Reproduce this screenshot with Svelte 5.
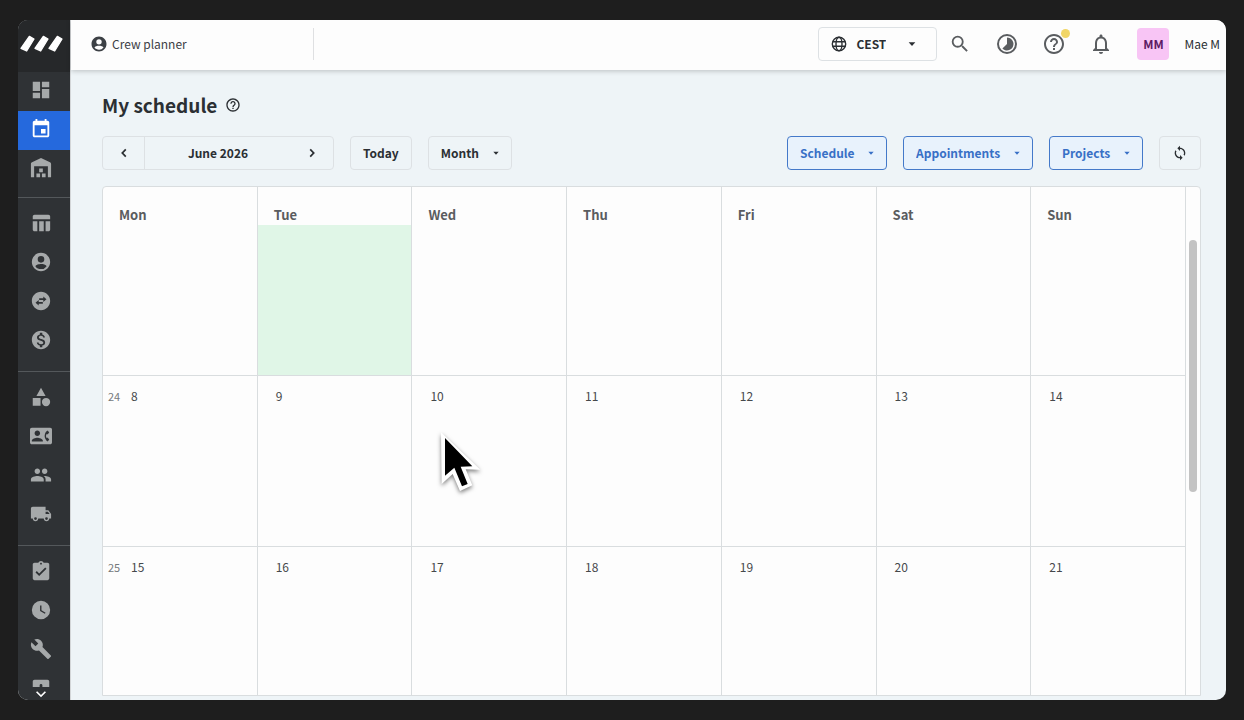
<script lang="ts">
  interface NavItem {
    name: string;
    label: string;
    active?: boolean;
  }

  interface Day {
    num: number | null;
    today?: boolean;
  }

  interface Week {
    num: number | null;
    days: Day[];
  }

  // 24x24 glyphs
  const icons: Record<string, string> = {
    dashboard: 'M3 13h8V3H3v10zm0 8h8v-6H3v6zm10 0h8V11h-8v10zm0-18v6h8V3h-8z',
    event:
      'M17 12h-5v5h5v-5zM16 1v2H8V1H6v2H5c-1.110 0-1.990.9-1.990 2L3 19c0 1.100.89 2 2 2h14c1.100 0 2-.9 2-2V5c0-1.100-.9-2-2-2h-1V1h-2zm3 18H5V8h14v11z',
    warehouse:
      'M1 22V7.500c0-.8.500-1.500 1.200-1.800L12 1l9.800 4.700c.7.300 1.200 1 1.200 1.800V22h-3.500V10h-15v12H1zM10 12.500h4v4h-4v-4zM7 18h4v4H7v-4zM13 18h4v4h-4v-4z',
    table: 'M10 10.020h5V21h-5V10.020zM17 21h3c1.100 0 2-.9 2-2v-9h-5v11zm3-18H5c-1.100 0-2 .9-2 2v3h19V5c0-1.100-.9-2-2-2zM3 19c0 1.100.9 2 2 2h3V10H3v9z',
    account:
      'M12 2C6.480 2 2 6.480 2 12s4.480 10 10 10 10-4.480 10-10S17.520 2 12 2zm0 3.500a3.600 3.600 0 1 1 0 7.200 3.600 3.600 0 0 1 0-7.200zm0 14.200c-2.500 0-4.710-1.080-6-2.920.03-1.690 4-2.580 6-2.580s5.970.89 6 2.580a7.200 7.200 0 0 1-6 2.920z',
    swap: 'M12 2C6.480 2 2 6.480 2 12s4.480 10 10 10 10-4.480 10-10S17.520 2 12 2zM9.500 17L6 14l3.500-3v2H14v2H9.500v2zm5-4v-2H10V9h4.500V7L18 10l-3.500 3z',
    money:
      'M12 2C6.480 2 2 6.480 2 12s4.480 10 10 10 10-4.480 10-10S17.520 2 12 2zm1.410 16.090V20h-2.670v-1.930c-1.710-.36-3.160-1.460-3.270-3.400h1.960c.1 1.050.82 1.870 2.650 1.870 1.960 0 2.400-.98 2.400-1.590 0-.83-.44-1.610-2.670-2.140-2.480-.6-4.180-1.620-4.180-3.670 0-1.720 1.390-2.840 3.110-3.210V4h2.670v1.950c1.860.45 2.790 1.860 2.850 3.390H14.300c-.05-1.110-.64-1.870-2.220-1.870-1.500 0-2.400.68-2.400 1.640 0 .84.65 1.390 2.670 1.910s4.180 1.390 4.180 3.910c-.01 1.830-1.380 2.830-3.120 3.160z',
    category: 'M12 2l-5 9h10L12 2zm5.500 11a4.500 4.500 0 1 0 0 9 4.500 4.500 0 0 0 0-9zM3 21.500h8.500V13H3v8.500z',
    contact:
      'M22 3H2C.9 3 0 3.900 0 5v14c0 1.100.9 2 2 2h20c1.100 0 1.990-.9 1.990-2L24 5c0-1.100-.9-2-2-2zM8 6c1.660 0 3 1.340 3 3s-1.340 3-3 3-3-1.340-3-3 1.340-3 3-3zm6 12H2v-1c0-2 4-3.100 6-3.100s6 1.100 6 3.100v1zm3.850-4h1.640L21 16l-1.990 1.990c-1.310-.98-2.280-2.380-2.730-3.990-.18-.64-.28-1.310-.28-2s.1-1.360.28-2c.45-1.620 1.420-3.010 2.730-3.990L21 8l-1.510 2h-1.640c-.22.63-.35 1.300-.35 2s.13 1.370.35 2z',
    people:
      'M16 11c1.660 0 2.990-1.340 2.990-3S17.660 5 16 5s-3 1.340-3 3 1.340 3 3 3zm-8 0c1.660 0 2.990-1.340 2.990-3S9.660 5 8 5 5 6.340 5 8s1.340 3 3 3zm0 2c-2.330 0-7 1.170-7 3.500V19h14v-2.500C15 14.170 10.330 13 8 13zm8 0c-.29 0-.62.02-.97.05 1.160.84 1.970 1.970 1.970 3.450V19h6v-2.500c0-2.330-4.670-3.500-7-3.500z',
    truck:
      'M20 8h-3V4H3c-1.100 0-2 .9-2 2v11h2c0 1.660 1.340 3 3 3s3-1.340 3-3h6c0 1.660 1.340 3 3 3s3-1.340 3-3h2v-5l-3-4zM6 18.500a1.500 1.500 0 1 1 0-3 1.500 1.500 0 0 1 0 3zm13.500-9l1.960 2.500H17V9.500h2.500zm-1.500 9a1.500 1.500 0 1 1 0-3 1.500 1.500 0 0 1 0 3z',
    task: 'M19 3h-4.180C14.400 1.840 13.300 1 12 1s-2.400.84-2.820 2H5c-1.100 0-2 .9-2 2v15c0 1.100.9 2 2 2h14c1.100 0 2-.9 2-2V5c0-1.100-.9-2-2-2zm-7 0c.55 0 1 .45 1 1s-.45 1-1 1-1-.45-1-1 .45-1 1-1zm-2 14.500l-4-4 1.410-1.410L10 14.670l6.590-6.580L18 9.500l-8 8z',
    clock:
      'M12 2a10 10 0 1 0 0 20 10 10 0 0 0 0-20zm4.200 14.200L11 13V7h1.500v5.200l4.500 2.700-.8 1.300z',
    wrench:
      'M22.700 19l-9.100-9.100c.9-2.300.4-5-1.500-6.900-2-2-5-2.400-7.400-1.300L9 6 6 9 1.600 4.700C.4 7.100.9 10.100 2.900 12.100c1.900 1.900 4.600 2.400 6.900 1.500l9.100 9.100c.4.4 1 .4 1.400 0l2.300-2.300c.5-.4.5-1.100.1-1.400z',
    board: 'M5 3h14c1.100 0 2 .9 2 2v6h-7.500V9a1.500 1.500 0 0 0-3 0v2H3V5c0-1.100.9-2 2-2z',
    search:
      'M15.500 14h-.79l-.28-.27A6.471 6.471 0 0 0 16 9.500 6.500 6.500 0 1 0 9.500 16c1.610 0 3.090-.59 4.230-1.570l.27.28v.79l5 4.990L20.490 19l-4.990-5zm-6 0a4.500 4.500 0 1 1 0-9 4.500 4.500 0 0 1 0 9z',
    progress:
      'M12 2a10 10 0 1 0 0 20 10 10 0 0 0 0-20zm0 18a8 8 0 1 1 0-16 8 8 0 0 1 0 16zM12 5.500V12l-4.600 4.600A6.500 6.500 0 1 0 12 5.500z',
    help: 'M11 18h2v-2h-2v2zm1-16C6.480 2 2 6.480 2 12s4.480 10 10 10 10-4.480 10-10S17.520 2 12 2zm0 18c-4.410 0-8-3.590-8-8s3.590-8 8-8 8 3.590 8 8-3.590 8-8 8zm0-14c-2.210 0-4 1.790-4 4h2c0-1.100.9-2 2-2s2 .9 2 2c0 2-3 1.750-3 5h2c0-2.250 3-2.500 3-5 0-2.210-1.790-4-4-4z',
    bell: 'M12 22c1.100 0 2-.9 2-2h-4c0 1.100.89 2 2 2zm6-6v-5c0-3.070-1.640-5.640-4.500-6.320V4c0-.83-.67-1.500-1.500-1.500s-1.500.67-1.500 1.500v.68C7.630 5.360 6 7.920 6 11v5l-2 2v1h16v-1l-2-2zm-2 1H8v-6c0-2.480 1.510-4.500 4-4.500s4 2.020 4 4.500v6z',
    refresh:
      'M12 4V1L8 5l4 4V6c3.310 0 6 2.690 6 6 0 1.010-.25 1.970-.7 2.800l1.460 1.460A7.930 7.930 0 0 0 20 12c0-4.420-3.580-8-8-8zm0 14c-3.310 0-6-2.690-6-6 0-1.010.25-1.970.7-2.800L5.240 7.740A7.930 7.930 0 0 0 4 12c0 4.420 3.580 8 8 8v3l4-4-4-4v3z',
    left: 'M15.600 7.600L13.800 5.800 7.600 12l6.200 6.200 1.800-1.800L11.200 12z',
    right: 'M10.200 5.800L8.400 7.600l4.400 4.400-4.400 4.400 1.800 1.800 6.200-6.200z',
    down: 'M7.410 8.590L12 13.170l4.590-4.580L18 10l-6 6-6-6z',
    caret: 'M4 8h16l-8 9z',
  };

  const navGroups: NavItem[][] = [
    [
      { name: 'dashboard', label: 'Dashboard' },
      { name: 'event', label: 'Schedule', active: true },
      { name: 'warehouse', label: 'Warehouse' },
    ],
    [
      { name: 'table', label: 'Projects' },
      { name: 'account', label: 'Crew' },
      { name: 'swap', label: 'Subrent' },
      { name: 'money', label: 'Invoices' },
    ],
    [
      { name: 'category', label: 'Equipment' },
      { name: 'contact', label: 'Contacts' },
      { name: 'people', label: 'Crew members' },
      { name: 'truck', label: 'Vehicles' },
    ],
    [
      { name: 'task', label: 'Tasks' },
      { name: 'clock', label: 'Time registration' },
      { name: 'wrench', label: 'Maintenance' },
      { name: 'board', label: 'Boards' },
    ],
  ];

  const weekdays = ['Mon', 'Tue', 'Wed', 'Thu', 'Fri', 'Sat', 'Sun'];

  function week(num: number, first: number): Week {
    return { num, days: weekdays.map((_, i) => ({ num: first + i })) };
  }

  // the first week is scrolled under the header, only its lower part shows
  const weeks: Week[] = [
    { num: null, days: weekdays.map((_, i) => ({ num: null, today: i === 1 })) },
    week(24, 8),
    week(25, 15),
  ];

  const filters = ['Schedule', 'Appointments', 'Projects'];

  let timezone = $state('CEST');
  let view = $state('Month');
</script>

{#snippet icon(name: string, size = 24)}
  <svg width={size} height={size} viewBox="0 0 24 24" fill="currentColor" fill-rule="evenodd" aria-hidden="true">
    <path d={icons[name]} />
  </svg>
{/snippet}

<div class="screen">
  <div class="window">
    <aside class="sidebar">
      <a class="logo" href="#home" aria-label="Home">
        <svg width="45" height="20" viewBox="0 0 135 60" fill="#fff" stroke="#fff" stroke-width="4" stroke-linejoin="round" aria-hidden="true">
          <path d="M31 7l14 8-22 36-17-8z" />
          <path d="M73 7l14 8-22 36-17-8z" />
          <path d="M115 7l14 8-22 36-17-8z" />
        </svg>
      </a>
      <nav>
        {#each navGroups as group}
          <div class="nav-group">
            {#each group as item (item.name)}
              <a class="nav-item" class:active={item.active} href="#{item.name}" aria-label={item.label}>
                {@render icon(item.name, 22)}
              </a>
            {/each}
          </div>
        {/each}
      </nav>
      <button class="nav-more" aria-label="Scroll down">{@render icon('down', 20)}</button>
    </aside>

    <div class="main">
      <header class="topbar">
        <a class="crumb" href="#crew">
          {@render icon('account', 18)}
          Crew planner
        </a>
        <div class="tools">
          <div class="dropdown timezone">
            <svg class="globe" width="16" height="16" viewBox="0 0 16 16" fill="none" stroke="currentColor" stroke-width="1.400" aria-hidden="true">
              <circle cx="8" cy="8" r="6.700" />
              <ellipse cx="8" cy="8" rx="3" ry="6.700" />
              <path d="M1.700 5.700h12.600M1.700 10.300h12.600" />
            </svg>
            <select aria-label="Time zone" bind:value={timezone}>
              <option>CEST</option>
              <option>UTC</option>
            </select>
            <span class="caret">{@render icon('caret', 10)}</span>
          </div>
          <div class="actions">
            <button class="tool" aria-label="Search">{@render icon('search', 22)}</button>
            <button class="tool" aria-label="Activity">{@render icon('progress')}</button>
            <button class="tool" aria-label="Help">
              {@render icon('help')}
              <span class="dot"></span>
            </button>
            <button class="tool" aria-label="Notifications">{@render icon('bell')}</button>
          </div>
          <button class="user">
            <span class="avatar">MM</span>
            Mae M
          </button>
        </div>
      </header>

      <section class="content">
        <div class="title">
          <h1>My schedule</h1>
          {@render icon('help', 16)}
        </div>

        <div class="toolbar">
          <div class="period">
            <button aria-label="Previous month">{@render icon('left', 16)}</button>
            <span>June 2026</span>
            <button aria-label="Next month">{@render icon('right', 16)}</button>
          </div>
          <button class="btn">Today</button>
          <div class="dropdown">
            <select aria-label="View" bind:value={view}>
              <option>Month</option>
              <option>Week</option>
              <option>Day</option>
            </select>
            <span class="caret">{@render icon('caret', 8)}</span>
          </div>

          <div class="filters">
            {#each filters as filter}
              <div class="dropdown filter">
                <select aria-label={filter}>
                  <option>{filter}</option>
                </select>
                <span class="caret">{@render icon('caret', 8)}</span>
              </div>
            {/each}
            <button class="btn refresh" aria-label="Refresh">{@render icon('refresh', 16)}</button>
          </div>
        </div>

        <div class="calendar">
          <table>
            <thead>
              <tr>
                {#each weekdays as name}
                  <th>{name}</th>
                {/each}
              </tr>
            </thead>
            <tbody>
              {#each weeks as { num, days }}
                <tr class:partial={num === null}>
                  {#each days as day, i}
                    <td class:today={day.today}>
                      {#if day.num !== null}
                        <div class="date">
                          {#if i === 0}<span class="week">{num}</span>{/if}
                          <span>{day.num}</span>
                        </div>
                      {/if}
                    </td>
                  {/each}
                </tr>
              {/each}
            </tbody>
          </table>
          <div class="scrollbar"><div class="thumb"></div></div>
        </div>
      </section>
    </div>

    <svg class="cursor" width="44" height="64" viewBox="117 180 132 192" aria-hidden="true">
      <path fill="#fff" d="M123 187L241 299 197 298 217 346 180 363 158 312 125 342z" />
      <path d="M135 204L217 289 182 290 203 342 186 349 163 293 135 317z" />
    </svg>
  </div>
</div>

<style>
  :global(body) {
    background: #1e1e1e;
  }

  .screen {
    box-sizing: border-box;
    height: 100vh;
    padding: 20px 18px;
    font-family: 'Noto Sans CJK JP', 'Open Sans', sans-serif;
    font-size: 12px;
    line-height: 20px;
    color: #2b2f33;
  }

  .screen :global(svg) {
    display: block;
    flex: none;
  }

  .window {
    position: relative;
    display: flex;
    height: 100%;
    border-radius: 10px;
    overflow: hidden;
    background: #eef4f7;
  }

  button,
  select {
    margin: 0;
    padding: 0;
    border: 0;
    background: none;
    font: inherit;
    color: inherit;
    cursor: pointer;
  }

  a {
    color: inherit;
    text-decoration: none;
  }

  /* sidebar */
  .sidebar {
    display: flex;
    flex-direction: column;
    flex: none;
    width: 52px;
    border-right: 1px solid #d3d6d8;
    background: #2f3235;
    color: #a6a9aa;
  }

  .logo {
    display: flex;
    flex: none;
    align-items: center;
    box-sizing: border-box;
    height: 52px;
    padding: 0 0 4px 1px;
    background: #26282a;
  }

  nav {
    flex: 1;
    min-height: 0;
    overflow: hidden;
  }

  .nav-group {
    padding: 7px 0 10px;
    border-bottom: 1px solid #54585b;
  }

  .nav-group:first-child {
    padding: 0 0 8px;
  }

  .nav-item {
    display: flex;
    align-items: center;
    justify-content: center;
    box-sizing: border-box;
    height: 39px;
    padding: 0 6px 3px 0;
  }

  .nav-item.active {
    background: #2569dd;
    color: #fff;
  }

  .nav-more {
    display: flex;
    align-items: center;
    justify-content: center;
    flex: none;
    height: 13px;
    padding: 0 6px 0 0;
    color: #fff;
  }

  /* top bar */
  .main {
    display: flex;
    flex: 1;
    flex-direction: column;
    min-width: 0;
  }

  .topbar {
    position: relative;
    display: flex;
    align-items: center;
    justify-content: space-between;
    box-sizing: border-box;
    flex: none;
    height: 50px;
    padding: 0 6px 2px 19px;
    background: #fdfdfd;
    box-shadow: 0 1px 5px rgb(0 0 0 / 0.22);
  }

  .crumb {
    display: flex;
    align-items: center;
    gap: 4px;
    box-sizing: border-box;
    width: 224px;
    height: 32px;
    border-right: 1px solid #dfe0e2;
    color: #3c4045;
  }

  .tools,
  .actions,
  .user {
    display: flex;
    align-items: center;
  }

  .actions {
    gap: 23px;
    margin: 0 24px 0 11px;
  }

  .tool {
    position: relative;
    display: flex;
    align-items: center;
    justify-content: center;
    width: 24px;
    height: 24px;
    color: #5a5d60;
  }

  .dot {
    position: absolute;
    top: -3px;
    right: -4px;
    width: 9px;
    height: 9px;
    border-radius: 50%;
    background: #f1d666;
  }

  .user {
    gap: 15px;
    white-space: nowrap;
  }

  .avatar {
    width: 32px;
    border-radius: 4px;
    background: #f8c5f5;
    color: #5c1a63;
    font-weight: 700;
    line-height: 32px;
    text-align: center;
  }

  /* buttons and drop-downs */
  .btn,
  .dropdown select {
    box-sizing: border-box;
    height: 34px;
    border: 1px solid #dde1e4;
    border-radius: 4px;
    font-weight: 700;
  }

  .btn {
    padding: 0 12px;
  }

  .dropdown {
    position: relative;
  }

  .dropdown select {
    display: block;
    appearance: none;
    padding: 0 31px 0 12px;
  }

  .caret {
    position: absolute;
    top: 50%;
    right: 12px;
    transform: translateY(-50%);
    pointer-events: none;
  }

  .timezone select {
    padding: 0 50px 0 37px;
  }

  .timezone .caret {
    right: 20px;
  }

  .globe {
    position: absolute;
    top: 9px;
    left: 13px;
    pointer-events: none;
  }

  .filter {
    color: #3870c6;
  }

  .filter select {
    border-color: #4479c9;
    background: #e8f2fc;
  }

  /* schedule */
  .content {
    display: flex;
    flex: 1;
    flex-direction: column;
    gap: 16px;
    min-height: 0;
    padding: 20px 25px 4px 31px;
  }

  .title {
    display: flex;
    align-items: center;
    gap: 8px;
  }

  h1 {
    margin: 0;
    font-size: 19px;
    font-weight: 700;
    line-height: 30px;
  }

  .toolbar,
  .filters {
    display: flex;
    align-items: center;
    gap: 16px;
  }

  .filters {
    margin-left: auto;
  }

  .period {
    display: flex;
    align-items: center;
    box-sizing: border-box;
    width: 232px;
    height: 34px;
    border: 1px solid #dde1e4;
    border-radius: 4px;
  }

  .period button {
    display: flex;
    align-items: center;
    justify-content: center;
    width: 42px;
    height: 32px;
  }

  .period button:first-child {
    border-right: 1px solid #dde1e4;
  }

  .period span {
    flex: 1;
    font-weight: 700;
    text-align: center;
  }

  .calendar {
    display: flex;
    flex: 1;
    min-height: 0;
    overflow: hidden;
    border: 1px solid #d9dddf;
    border-radius: 4px 4px 0 0;
    background: #fdfdfd;
  }

  table {
    width: 100%;
    table-layout: fixed;
    border-spacing: 0;
  }

  th,
  td {
    box-sizing: border-box;
    border-right: 1px solid #d9dddf;
    text-align: left;
    vertical-align: top;
  }

  th {
    height: 38px;
    padding: 18px 16px 0;
    color: #5a5c5f;
    font-size: 13px;
    font-weight: 700;
  }

  td {
    height: 171px;
    padding: 10px 18px;
    border-top: 1px solid #d9dddf;
    color: #45484b;
  }

  td:first-child {
    padding-left: 5px;
  }

  .partial td {
    height: 150px;
    border-top: 0;
  }

  .today {
    background: #e0f6e7;
  }

  .date {
    display: flex;
  }

  .week {
    width: 23px;
    color: #75797c;
    font-size: 11px;
  }

  .scrollbar {
    flex: none;
    width: 14px;
    padding-top: 53px;
  }

  .thumb {
    width: 8px;
    height: 252px;
    margin: 0 auto;
    border-radius: 4px;
    background: #c3c3c3;
  }

  .cursor {
    position: absolute;
    top: 410px;
    left: 421px;
    filter: drop-shadow(0 2px 2px rgb(0 0 0 / 0.5));
    pointer-events: none;
  }
</style>
